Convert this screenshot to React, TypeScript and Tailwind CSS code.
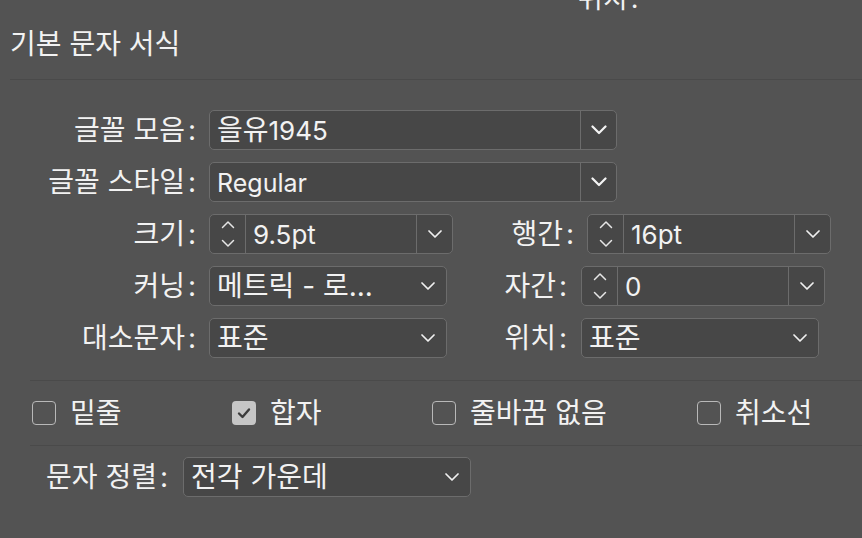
import React from "react";

const FONT = 'Inter, "Noto Sans CJK KR", sans-serif';

function BigChevron() {
  return (
    <svg width="16" height="10" viewBox="0 0 16 10">
      <polyline points="1.5,1.5 8,8 14.5,1.5" fill="none" stroke="#f4f4f4" strokeWidth="2.2" strokeLinecap="round" strokeLinejoin="round" />
    </svg>
  );
}

function SmallChevron() {
  return (
    <svg width="14" height="8" viewBox="0 0 14 8">
      <polyline points="1,1 7,7 13,1" fill="none" stroke="#f0f0f0" strokeWidth="1.7" strokeLinecap="round" strokeLinejoin="round" />
    </svg>
  );
}

function Stepper() {
  return (
    <div className="w-[36px] h-full flex items-center justify-center border-r border-[#6c6c6c] shrink-0">
      <svg width="16" height="28" viewBox="0 0 16 28">
        <polyline points="2.5,7.5 8,2 13.5,7.5" fill="none" stroke="#e6e6e6" strokeWidth="1.5" strokeLinecap="round" strokeLinejoin="round" />
        <polyline points="2.5,20.5 8,26 13.5,20.5" fill="none" stroke="#e6e6e6" strokeWidth="1.5" strokeLinecap="round" strokeLinejoin="round" />
      </svg>
    </div>
  );
}

function Combo({ children, width, stepper, divided, big }: { children: React.ReactNode; width: string; stepper?: boolean; divided?: boolean; big?: boolean }) {
  return (
    <div className={`${width} h-[40px] flex items-center rounded-[5px] border border-[#6c6c6c] bg-[#474747] shrink-0 overflow-hidden`}>
      {stepper && <Stepper />}
      <div className="flex-1 pl-[7px] whitespace-nowrap leading-[32px] text-[#f2f2f2]">{children}</div>
      {divided ? (
        <div className="w-[36px] h-full border-l border-[#6c6c6c] flex items-center justify-center shrink-0">
          {big ? <BigChevron /> : <SmallChevron />}
        </div>
      ) : (
        <div className="w-[36px] h-full flex items-center justify-center shrink-0">
          <SmallChevron />
        </div>
      )}
    </div>
  );
}

function Checkbox({ checked, label, width }: { checked?: boolean; label: string; width?: string }) {
  return (
    <div className={`${width ?? ""} flex items-center shrink-0`}>
      {checked ? (
        <div className="w-[24px] h-[24px] rounded-[4px] bg-[#c6c6c6] flex items-center justify-center">
          <svg width="16" height="14" viewBox="0 0 16 14">
            <polyline points="3,7.5 6.5,11 13,3.5" fill="none" stroke="#3c3c3c" strokeWidth="2.4" strokeLinecap="round" strokeLinejoin="round" />
          </svg>
        </div>
      ) : (
        <div className="w-[24px] h-[24px] rounded-[4px] border-[1.5px] border-[#b8b8b8]" />
      )}
      <span className="ml-[14px] leading-[32px] text-[#f2f2f2]">{label}</span>
    </div>
  );
}

function Label({ text, width }: { text: string; width: string }) {
  return (
    <div className={`${width} text-right whitespace-nowrap shrink-0`}>
      {text}
      <span className="ml-[3px]">:</span>
    </div>
  );
}

export default function App() {
  return (
    <div className="w-[862px] h-[538px] bg-[#535353] overflow-hidden flex flex-col text-[28px] leading-[32px] text-[#f2f2f2]" style={{ fontFamily: FONT }}>
      <div className="h-[15px] flex shrink-0">
        <div className="-mt-[17px] ml-[578px] leading-[32px] text-[27px]">
          위치<span className="ml-[3px]">:</span>
        </div>
      </div>
      <div className="ml-[10px] h-[65px] border-b border-[#4a4a4a] shrink-0">
        <div className="pt-[13px] leading-[32px] text-[28px]">기본 문자 서식</div>
      </div>

      <div className="mt-[30px] flex flex-col gap-[12px]">
        <div className="flex items-center h-[40px]">
          <Label text="글꼴 모음" width="w-[196px]" />
          <div className="ml-[13px]">
            <Combo width="w-[408px]" divided big>
              을유<span className="text-[26px]">1945</span>
            </Combo>
          </div>
        </div>
        <div className="flex items-center h-[40px]">
          <Label text="글꼴 스타일" width="w-[196px]" />
          <div className="ml-[13px]">
            <Combo width="w-[408px]" divided big>
              <span className="text-[25px]">Regular</span>
            </Combo>
          </div>
        </div>
        <div className="flex items-center h-[40px]">
          <Label text="크기" width="w-[196px]" />
          <div className="ml-[13px]">
            <Combo width="w-[244px]" stepper divided>
              <span className="text-[26px]">9.5pt</span>
            </Combo>
          </div>
          <Label text="행간" width="w-[121px]" />
          <div className="ml-[13px]">
            <Combo width="w-[244px]" stepper divided>
              <span className="text-[26px]">16pt</span>
            </Combo>
          </div>
        </div>
        <div className="flex items-center h-[40px]">
          <Label text="커닝" width="w-[196px]" />
          <div className="ml-[13px]">
            <Combo width="w-[238px]">메트릭 - 로...</Combo>
          </div>
          <Label text="자간" width="w-[120px]" />
          <div className="ml-[14px]">
            <Combo width="w-[244px]" stepper divided>
              <span className="text-[26px]">0</span>
            </Combo>
          </div>
        </div>
        <div className="flex items-center h-[40px]">
          <Label text="대소문자" width="w-[196px]" />
          <div className="ml-[13px]">
            <Combo width="w-[238px]">표준</Combo>
          </div>
          <Label text="위치" width="w-[120px]" />
          <div className="ml-[14px]">
            <Combo width="w-[238px]">표준</Combo>
          </div>
        </div>
      </div>

      <div className="mt-[22px] ml-[30px] h-[66px] border-y border-[#4a4a4a] flex items-center pl-[2px] shrink-0">
        <Checkbox label="밑줄" width="w-[200px]" />
        <Checkbox label="합자" checked width="w-[200px]" />
        <Checkbox label="줄바꿈 없음" width="w-[265px]" />
        <Checkbox label="취소선" />
      </div>

      <div className="mt-[11px] flex items-center h-[40px] shrink-0">
        <Label text="문자 정렬" width="w-[168px]" />
        <div className="ml-[15px]">
          <Combo width="w-[288px]">전각 가운데</Combo>
        </div>
      </div>
    </div>
  );
}
